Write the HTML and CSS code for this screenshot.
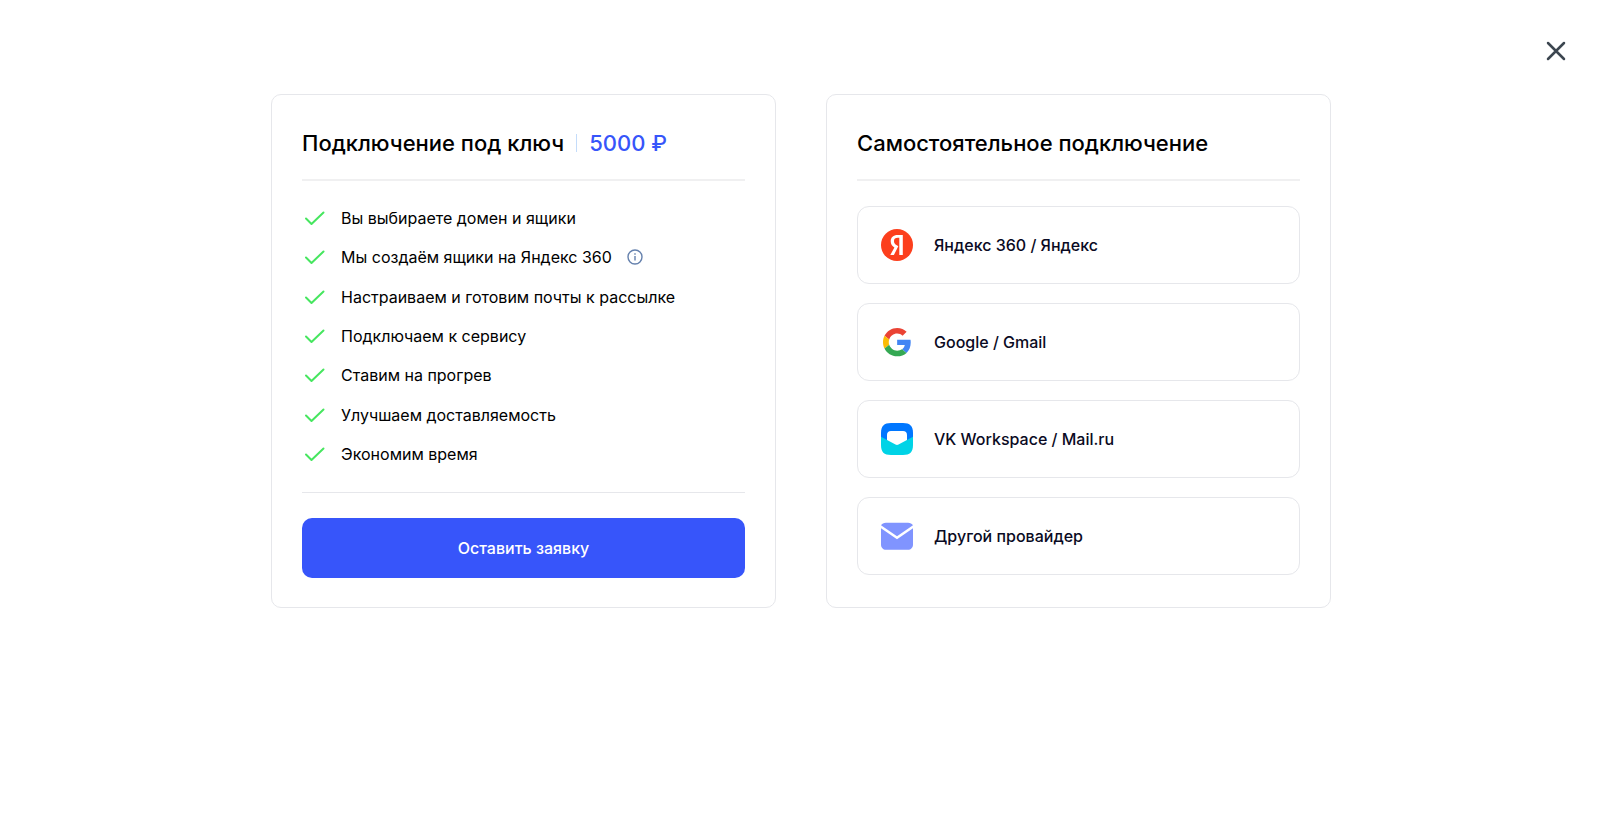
FILE: index.html
```html
<!DOCTYPE html>
<html lang="ru">
<head>
<meta charset="utf-8">
<meta name="viewport" content="width=device-width, initial-scale=1">
<title>Подключение почты</title>
<link rel="stylesheet" href="styles.css">
</head>
<body>
<header class="topbar">
  <button class="close" type="button" aria-label="Закрыть">
    <svg width="20" height="20" viewBox="0 0 20 20" fill="none" stroke="#3c4650" stroke-width="2.500" stroke-linecap="round"><path d="M2 2l16 16M18 2L2 18"/></svg>
  </button>
</header>
<main class="plans">
  <section class="card">
    <div class="card-head">
      <h2 class="title">Подключение под ключ</h2>
      <span class="price">5000 ₽</span>
    </div>
    <ul class="benefits">
      <li class="benefit"><svg class="check" viewBox="0 0 24 24"><path d="M4 12.500l5.500 5.500L21.500 6.500"/></svg>Вы выбираете домен и ящики</li>
      <li class="benefit"><svg class="check" viewBox="0 0 24 24"><path d="M4 12.500l5.500 5.500L21.500 6.500"/></svg>Мы создаём ящики на Яндекс 360
        <button class="info" type="button" aria-label="Подробнее"><svg width="16" height="16" viewBox="0 0 16 16" fill="none" stroke="#6581ad" stroke-width="1.400"><circle cx="8" cy="8" r="7"/><path d="M8 7v4.500M8 4.200v1.600"/></svg></button></li>
      <li class="benefit"><svg class="check" viewBox="0 0 24 24"><path d="M4 12.500l5.500 5.500L21.500 6.500"/></svg>Настраиваем и готовим почты к рассылке</li>
      <li class="benefit"><svg class="check" viewBox="0 0 24 24"><path d="M4 12.500l5.500 5.500L21.500 6.500"/></svg>Подключаем к сервису</li>
      <li class="benefit"><svg class="check" viewBox="0 0 24 24"><path d="M4 12.500l5.500 5.500L21.500 6.500"/></svg>Ставим на прогрев</li>
      <li class="benefit"><svg class="check" viewBox="0 0 24 24"><path d="M4 12.500l5.500 5.500L21.500 6.500"/></svg>Улучшаем доставляемость</li>
      <li class="benefit"><svg class="check" viewBox="0 0 24 24"><path d="M4 12.500l5.500 5.500L21.500 6.500"/></svg>Экономим время</li>
    </ul>
    <button class="submit" type="button">Оставить заявку</button>
  </section>
  <section class="card">
    <div class="card-head">
      <h2 class="title">Самостоятельное подключение</h2>
    </div>
    <div class="providers">
      <button class="provider" type="button">
        <svg class="logo" viewBox="0 0 32 32"><circle cx="16" cy="16" r="16" fill="#fc3f1d"/><path fill="#fff" d="M18.300 8.800h-1.500c-2.500 0-3.800 1.200-3.800 3.100 0 2.100.9 3.100 2.800 4.400l1.500 1-4.400 8.700H9.300l4.100-7.500c-2.300-1.700-3.700-3.300-3.700-6.300 0-3.700 2.600-6.200 7-6.200h5.100V26h-3.500z"/></svg>
        Яндекс 360 / Яндекс</button>
      <button class="provider" type="button">
        <svg class="logo" viewBox="0 0 32 32"><g transform="translate(2 2) scale(.59)"><path fill="#ea4335" d="M24 9.500c3.540 0 6.710 1.220 9.210 3.600l6.850-6.850C35.900 2.380 30.470 0 24 0 14.620 0 6.510 5.380 2.560 13.220l7.980 6.190C12.430 13.720 17.740 9.500 24 9.500z"/><path fill="#4285f4" d="M46.980 24.550c0-1.570-.15-3.090-.38-4.550H24v9.020h12.940c-.58 2.960-2.260 5.480-4.780 7.180l7.730 6c4.510-4.180 7.090-10.360 7.090-17.650z"/><path fill="#fbbc05" d="M10.530 28.590c-.48-1.450-.76-2.990-.76-4.590s.27-3.140.76-4.590l-7.980-6.190C.92 16.460 0 20.120 0 24c0 3.880.92 7.540 2.560 10.780l7.970-6.190z"/><path fill="#34a853" d="M24 48c6.480 0 11.930-2.130 15.890-5.810l-7.730-6c-2.150 1.450-4.920 2.300-8.160 2.300-6.260 0-11.570-4.220-13.470-9.910l-7.980 6.190C6.510 42.620 14.620 48 24 48z"/></g></svg>
        Google / Gmail</button>
      <button class="provider" type="button">
        <svg class="logo" viewBox="0 0 32 32"><path fill="#07f" d="M10 0h12c7 0 10 3 10 10v10H0V10C0 3 3 0 10 0z"/><path fill="#fff" d="M6 12c0-2.500 1.500-4 4-4h12c2.500 0 4 1.500 4 4v6l-10 6-10-6z"/><path fill="#00d3e6" d="M0 13.800l14.500 7.800q1.500.9 3 0L32 13.800V22c0 7-3 10-10 10H10C3 32 0 29 0 22z"/></svg>
        VK Workspace / Mail.ru</button>
      <button class="provider" type="button">
        <svg class="logo" viewBox="0 0 32 32"><path fill="#8094ff" d="M0 5.300C1 3.800 2.700 2.700 5 2.700h22c2.300 0 4 1.100 5 2.600L16 16.300zM0 8.300l16 11 16-11v16.400c0 2.900-2.100 5-5 5H5c-2.900 0-5-2.100-5-5z"/></svg>
        Другой провайдер</button>
    </div>
  </section>
</main>
</body>
</html>
```
FILE: styles.css
```css
* {
  box-sizing: border-box;
}

body {
  margin: 0;
  background: #fff;
  color: #000;
  font-family: Inter, "Noto Sans", sans-serif;
  font-size: 16px;
  line-height: 24px;
}

button {
  border: 0;
  padding: 0;
  background: none;
  color: inherit;
  font: inherit;
  cursor: pointer;
}

svg {
  display: block;
  flex: none;
}

.topbar {
  display: flex;
  justify-content: flex-end;
  padding: 35px 28px 27px;
}

.close {
  display: grid;
  place-items: center;
  width: 32px;
  height: 32px;
}

.plans {
  display: grid;
  grid-template-columns: repeat(auto-fit, minmax(360px, 1fr));
  gap: 50px;
  max-width: 1100px;
  margin: 0 auto;
  padding: 0 19px 40px 21px;
}

.card {
  display: flex;
  flex-direction: column;
  padding: 30px 30px 29px;
  border: 1px solid #e6e7eb;
  border-radius: 10px;
}

.card-head {
  display: flex;
  align-items: center;
  gap: 12px;
  padding-bottom: 18px;
  border-bottom: 2px solid #f0f0f1;
}

.title {
  margin: 0;
  font-size: 22px;
  font-weight: 500;
  line-height: 36px;
}

.price {
  display: flex;
  align-items: center;
  gap: 12px;
  color: #3755fa;
  font-size: 22px;
  font-weight: 500;
}

.price::before {
  content: "";
  width: 1px;
  height: 18px;
  background: #c4dcfa;
}

.benefits {
  display: flex;
  flex: 1;
  flex-direction: column;
  justify-content: space-between;
  margin: 0 0 25px;
  padding: 25px 0 26px;
  border-bottom: 1px solid #e6e7eb;
  list-style: none;
}

.benefit {
  display: flex;
  align-items: center;
  gap: 15px;
}

.check {
  width: 24px;
  height: 24px;
  fill: none;
  stroke: #46e65f;
  stroke-width: 2;
  stroke-linecap: round;
  stroke-linejoin: round;
}

.submit {
  height: 60px;
  border-radius: 10px;
  background: #3755fa;
  color: #fff;
  font-weight: 500;
}

.providers {
  display: grid;
  gap: 19px;
  padding: 25px 0 3px;
}

.provider {
  display: flex;
  align-items: center;
  gap: 21px;
  height: 78px;
  padding: 0 23px;
  border: 1px solid #e6e7eb;
  border-radius: 12px;
  color: #0a0a23;
  font-weight: 500;
  text-align: left;
}

.logo {
  width: 32px;
  height: 32px;
}
```
